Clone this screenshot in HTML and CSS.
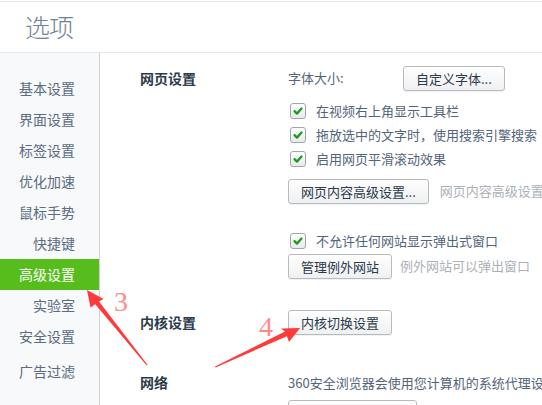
FILE: index.html
```html
<!DOCTYPE html>
<html lang="zh-CN">
<head>
    <meta charset="UTF-8">
    <meta name="viewport" content="width=device-width, initial-scale=1.0">
    <title>选项</title>
    <link rel="stylesheet" href="styles.css">
</head>
<body>
    <header class="header">
        <h1 class="title">选项</h1>
    </header>

    <div class="layout">
        <nav class="sidebar">
            <ul class="menu">
                <li class="menu-item">基本设置</li>
                <li class="menu-item">界面设置</li>
                <li class="menu-item">标签设置</li>
                <li class="menu-item">优化加速</li>
                <li class="menu-item">鼠标手势</li>
                <li class="menu-item">快捷键</li>
                <li class="menu-item is-active">高级设置</li>
                <li class="menu-item">实验室</li>
                <li class="menu-item">安全设置</li>
                <li class="menu-item menu-last">广告过滤</li>
            </ul>
        </nav>

        <main class="content">
            <section class="group group-web">
                <h2 class="group-title">网页设置</h2>
                <div class="group-body">
                    <div class="row">
                        <span class="label">字体大小:</span>
                        <button class="btn">自定义字体...</button>
                    </div>
                    <label class="check check-first">
                        <span class="box"><svg viewBox="0 0 16 16"><path d="M4 8.2 L6.8 11 L12 5.2"/></svg></span>
                        在视频右上角显示工具栏
                    </label>
                    <label class="check">
                        <span class="box"><svg viewBox="0 0 16 16"><path d="M4 8.2 L6.8 11 L12 5.2"/></svg></span>
                        拖放选中的文字时，使用搜索引擎搜索
                    </label>
                    <label class="check">
                        <span class="box"><svg viewBox="0 0 16 16"><path d="M4 8.2 L6.8 11 L12 5.2"/></svg></span>
                        启用网页平滑滚动效果
                    </label>
                    <div class="row row-advanced">
                        <button class="btn">网页内容高级设置...</button>
                        <span class="hint hint-wide">网页内容高级设置仅</span>
                    </div>
                    <label class="check check-popup">
                        <span class="box"><svg viewBox="0 0 16 16"><path d="M4 8.2 L6.8 11 L12 5.2"/></svg></span>
                        不允许任何网站显示弹出式窗口
                    </label>
                    <div class="row row-tight">
                        <button class="btn">管理例外网站</button>
                        <span class="hint">例外网站可以弹出窗口</span>
                    </div>
                </div>
            </section>

            <section class="group group-core">
                <h2 class="group-title">内核设置</h2>
                <div class="group-body">
                    <div class="row">
                        <button class="btn">内核切换设置</button>
                    </div>
                </div>
            </section>

            <section class="group group-net">
                <h2 class="group-title group-title-short">网络</h2>
                <div class="group-body">
                    <p class="text">360安全浏览器会使用您计算机的系统代理设</p>
                    <div class="row row-proxy">
                        <div class="btn btn-proxy"></div>
                    </div>
                </div>
            </section>
        </main>
    </div>

    <svg class="marks" viewBox="0 0 542 405">
        <polygon class="arrow" points="87,290 103.5,299 99,301.5 147.5,364.8 146.5,365.2 95.2,304.2 90.5,307.5"/>
        <polygon class="arrow" points="300,328 289,342 286.9,336.2 215.5,367.5 215,366.5 285,331.6 281,328.5"/>
        <text class="mark-num" x="114" y="311">3</text>
        <text class="mark-num" x="259" y="336">4</text>
    </svg>
</body>
</html>
```

FILE: styles.css
```css
* {
  box-sizing: border-box;
}

html,
body {
  margin: 0;
  padding: 0;
}

body {
  width: 542px;
  height: 405px;
  overflow: hidden;
  position: relative;
  background: #fff;
  font: 13px/1.4 "Noto Sans CJK SC", "Noto Sans", sans-serif;
  color: #536579;
}

.header {
  height: 52px;
  margin-top: 1px;
  border-top: 1px solid #e4e4e4;
  border-bottom: 1px solid #e6e9ec;
  padding-left: 25px;
}

.title {
  margin: 0;
  font-size: 25px;
  font-weight: 300;
  line-height: 48px;
  color: #718294;
  letter-spacing: -1px;
}

.layout {
  display: flex;
  height: 352px;
}

.sidebar {
  width: 100px;
  flex: none;
  background: #f7f9fb;
  border-right: 1px solid #cfd3d7;
  padding-top: 20px;
}

.menu {
  margin: 0;
  padding: 0;
  list-style: none;
}

.menu-item {
  height: 31px;
  line-height: 31px;
  padding-right: 24px;
  text-align: right;
  font-size: 14px;
  color: #5b6c7f;
  white-space: nowrap;
}
.menu-item.is-active {
  background: #57bd1c;
  color: #fff;
}
.menu-last {
  margin-top: 4px;
}

.content {
  flex: 1;
  min-width: 0;
  padding: 13px 0 0 40px;
  white-space: nowrap;
}

.group {
  display: grid;
  grid-template-columns: 148px auto;
}
.group-core {
  margin-top: 31px;
}
.group-net {
  margin-top: 39px;
}

.group-title {
  margin: 0;
  font-size: 14px;
  font-weight: bold;
  line-height: 25px;
  color: #2b3b4c;
}
.group-title-short {
  line-height: 16px;
}

.row {
  display: flex;
  align-items: center;
  height: 25px;
}
.row-advanced {
  margin-top: 8px;
}
.row-tight {
  margin-top: 1px;
}
.row-proxy {
  margin-top: 8px;
}

.label {
  width: 115px;
}

.btn {
  height: 25px;
  padding: 0 12px;
  border: 1px solid #b7bbc0;
  border-radius: 3px;
  background: linear-gradient(#fefefe, #eff0f1);
  box-shadow: 0 1px 1px rgba(0, 0, 0, 0.06);
  font: 13px/23px "Noto Sans CJK SC", "Noto Sans", sans-serif;
  color: #2a3a4b;
}
.btn-proxy {
  width: 129px;
}

.hint {
  margin-left: 8px;
  color: #abb1b7;
}
.hint-wide {
  margin-left: 11px;
}

.check {
  display: flex;
  align-items: center;
  height: 24px;
  padding-left: 2px;
}
.check-first {
  margin-top: 8px;
}
.check-popup {
  margin-top: 25px;
}

.box {
  width: 16px;
  height: 16px;
  margin-right: 10px;
  border: 1px solid #9fa6ad;
  border-radius: 3px;
  background: linear-gradient(#ffffff, #e7e9eb);
}
.box svg {
  display: block;
  width: 14px;
  height: 14px;
}
.box path {
  fill: none;
  stroke: #1f9a1c;
  stroke-width: 2.6;
  stroke-linecap: round;
  stroke-linejoin: round;
}

.text {
  margin: 0;
  height: 18px;
  line-height: 18px;
}

.marks {
  position: absolute;
  top: 0;
  left: 0;
  width: 542px;
  height: 405px;
  pointer-events: none;
}

.arrow {
  fill: #ff3a3a;
}

.mark-num {
  font: 28px "Liberation Serif", serif;
  fill: #ff8a8a;
}
```
